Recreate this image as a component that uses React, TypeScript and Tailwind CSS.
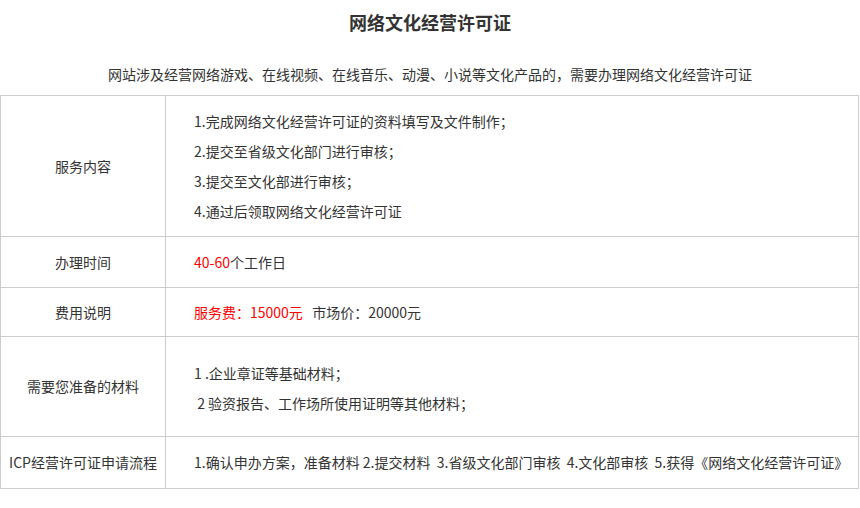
const rows = [
  { label: '服务内容', h: 'h-[141px]' },
  { label: '办理时间', h: 'h-[51px]' },
  { label: '费用说明', h: 'h-[49px]' },
  { label: '需要您准备的材料', h: 'h-[100px]' },
  { label: 'ICP经营许可证申请流程', h: 'h-[52px]' },
];

const steps = [
  '1.完成网络文化经营许可证的资料填写及文件制作；',
  '2.提交至省级文化部门进行审核；',
  '3.提交至文化部进行审核；',
  '4.通过后领取网络文化经营许可证',
];

function CellBody({ index }: { index: number }) {
  if (index === 0) {
    return (
      <div className="flex flex-col">
        {steps.map((s) => (
          <p key={s} className="leading-[30px]">{s}</p>
        ))}
      </div>
    );
  }
  if (index === 1) {
    return (
      <p>
        <span className="text-[#ff0000]">40-60</span>个工作日
      </p>
    );
  }
  if (index === 2) {
    return (
      <p className="whitespace-pre">
        <span className="text-[#ff0000]">服务费：15000元</span>   市场价：20000元
      </p>
    );
  }
  if (index === 3) {
    return (
      <div className="flex flex-col whitespace-pre pt-[3px]">
        <p className="leading-[30px]">1 .企业章证等基础材料；</p>
        <p className="leading-[30px]"> 2 验资报告、工作场所使用证明等其他材料；</p>
      </div>
    );
  }
  return (
    <p className="whitespace-pre">
      1.确认申办方案，准备材料 2.提交材料  3.省级文化部门审核  4.文化部审核  5.获得《网络文化经营许可证》
    </p>
  );
}

export default function App() {
  return (
    <div
      className="w-[860px] h-[508px] bg-white text-[#333] overflow-hidden"
      style={{ fontFamily: '"Noto Sans CJK SC", "Microsoft YaHei", sans-serif' }}
    >
      <h1 className="flex h-[44px] items-center justify-center text-[18px] font-bold text-[#333]">
        网络文化经营许可证
      </h1>
      <p className="mb-[11px] pt-[20px] text-center text-[14px] leading-[20px]">
        网站涉及经营网络游戏、在线视频、在线音乐、动漫、小说等文化产品的，需要办理网络文化经营许可证
      </p>
      <table className="w-[859px] table-fixed border-collapse text-[14px]">
        <colgroup>
          <col className="w-[165px]" />
          <col />
        </colgroup>
        <tbody>
          {rows.map((r, i) => (
            <tr key={r.label} className={r.h}>
              <td className="border border-[#cccccc] p-0 text-center align-middle">{r.label}</td>
              <td className="border border-[#cccccc] py-0 pl-[28px] pr-0 align-middle">
                <CellBody index={i} />
              </td>
            </tr>
          ))}
        </tbody>
      </table>
    </div>
  );
}
